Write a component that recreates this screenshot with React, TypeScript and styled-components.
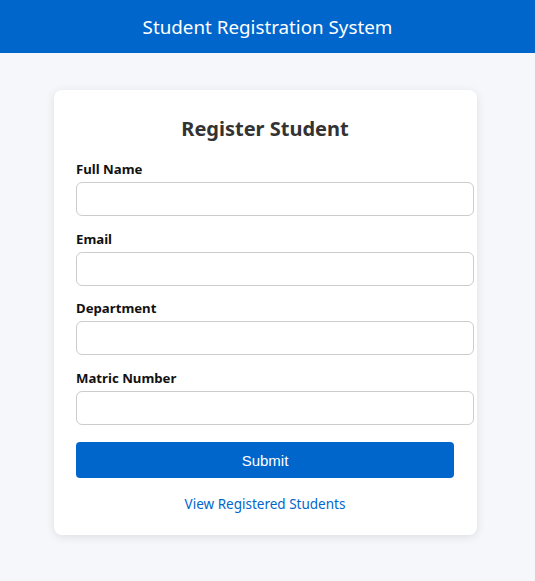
import React from "react";
import styled, { createGlobalStyle } from "styled-components";

const Global = createGlobalStyle`
  html, body { margin: 0; padding: 0; }
  body {
    background: #f5f7fb;
    font-family: "Noto Sans", "Open Sans", sans-serif;
    color: #222;
  }
  * { box-sizing: border-box; }
`;

const Header = styled.header`
  height: 53px;
  background: #0066cc;
  color: #fff;
  display: flex;
  align-items: center;
  justify-content: center;
  font-size: 18.8px;
  font-weight: 400;
`;

const Main = styled.main`
  display: flex;
  justify-content: center;
  padding: 37px 4px 40px 0;
`;

const Card = styled.div`
  width: 423px;
  background: #fff;
  border-radius: 8px;
  box-shadow: 0 2px 10px rgba(0, 0, 0, 0.1);
  padding: 26px 23px 21px 22px;
  display: flex;
  flex-direction: column;
`;

const Title = styled.h2`
  margin: 0 0 17px;
  font-size: 20px;
  line-height: 26px;
  font-weight: 700;
  text-align: center;
  color: #333;
`;

const Form = styled.form`
  display: flex;
  flex-direction: column;
  gap: 12.7px;
`;

const Field = styled.div`
  display: flex;
  flex-direction: column;
`;

const Label = styled.label`
  font-size: 13.2px;
  line-height: 20px;
  font-weight: 700;
  color: #111;
  margin-bottom: 3px;
`;

const Input = styled.input`
  width: calc(100% + 20px);
  height: 34px;
  padding: 8px;
  border: 1px solid #ccc;
  border-radius: 6px;
  font-size: 14px;
  font-family: inherit;
  background: #fff;
`;

const Button = styled.button`
  margin-top: 4.3px;
  height: 36px;
  width: 100%;
  background: #0066cc;
  color: #fff;
  border: none;
  border-radius: 4px;
  font-family: "Liberation Sans", Arial, sans-serif;
  font-size: 15px;
  cursor: pointer;
`;

const LinkRow = styled.div`
  margin-top: 16px;
  text-align: center;
  font-size: 13.5px;
  line-height: 20px;
`;

const Link = styled.a`
  color: #0066cc;
  text-decoration: none;
`;

const fields = ["Full Name", "Email", "Department", "Matric Number"];

export default function App() {
  return (
    <>
      <Global />
      <Header>Student Registration System</Header>
      <Main>
        <Card>
          <Title>Register Student</Title>
          <Form onSubmit={(e) => e.preventDefault()}>
            {fields.map((f) => (
              <Field key={f}>
                <Label>{f}</Label>
                <Input type="text" />
              </Field>
            ))}
            <Button type="submit">Submit</Button>
          </Form>
          <LinkRow>
            <Link href="#">View Registered Students</Link>
          </LinkRow>
        </Card>
      </Main>
    </>
  );
}
